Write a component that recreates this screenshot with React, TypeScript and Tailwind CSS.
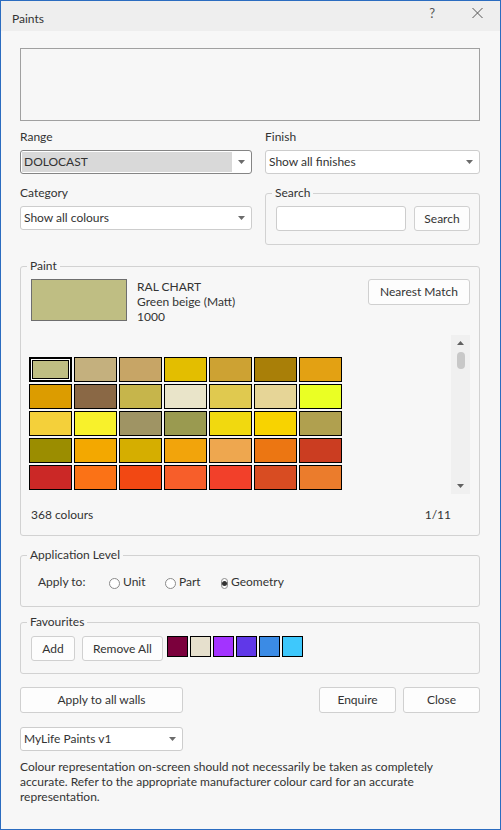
import React from 'react';

const swatches: string[][] = [
  ['#bfbe83', '#c4b07e', '#c7a566', '#e3be00', '#cda233', '#a97f08', '#e3a113'],
  ['#dc9c00', '#8a6845', '#c6b54b', '#e9e4c9', '#e0c94f', '#e6d597', '#eaff24'],
  ['#f4d03a', '#f8f12b', '#9f9464', '#9a9a50', '#f1d90f', '#f8d300', '#b0a04f'],
  ['#9b8d00', '#f3a800', '#d5ae00', '#f2a40b', '#eea74f', '#ec7612', '#cb3d21'],
  ['#cb2826', '#fb7216', '#f24813', '#f75e2a', '#f2402a', '#d84c22', '#eb7c2c'],
];

const favourites = ['#7b003c', '#e6e0cd', '#a333ff', '#6038e8', '#3b8be5', '#3ec8fc'];

function Chevron() {
  return (
    <svg width="7" height="4" viewBox="0 0 7 4">
      <path d="M0 0h7L3.5 4z" fill="#6b6b6b" />
    </svg>
  );
}

function Select({ value, width, focused }: { value: string; width: string; focused?: boolean }) {
  return (
    <div
      className={`${width} h-[24px] flex items-center rounded-[3px] border bg-white ${
        focused ? 'border-[#858585]' : 'border-[#cdcdcd]'
      }`}
    >
      {focused ? (
        <div className="flex-1 h-[20px] ml-[1px] bg-[#d9d9d9] flex items-center pl-[2px]">{value}</div>
      ) : (
        <div className="flex-1 pl-[3px]">{value}</div>
      )}
      <div className="w-[19px] flex justify-center">
        <Chevron />
      </div>
    </div>
  );
}

function Button({ children, className }: { children: React.ReactNode; className: string }) {
  return (
    <button className={`${className} flex items-center justify-center rounded-[3px] border border-[#d0d0d0] bg-[#fdfdfd]`}>
      {children}
    </button>
  );
}

function Radio({ label, checked }: { label: string; checked?: boolean }) {
  return (
    <div className="w-[56px] flex items-center">
      <span className="w-[11px] h-[11px] rounded-full border border-[#8a8a8a] bg-white flex items-center justify-center mt-[3px]">
        {checked && <span className="w-[5px] h-[5px] rounded-full bg-[#333333]" />}
      </span>
      <span className="ml-[3px] mt-[1px]">{label}</span>
    </div>
  );
}

export default function App() {
  return (
    <div className="w-[501px] h-[830px] border border-[#2b6cc0] bg-[#f7f7f7] text-[12px] leading-4 text-[#333333] font-['Lato','Noto_Sans',sans-serif] overflow-hidden">
      {/* title bar */}
      <div className="h-[30px] bg-[#eeeeee] flex items-start">
        <div className="pl-[11px] pt-[10px]">Paints</div>
        <div className="ml-auto flex items-start">
          <span className="mt-[4px] mr-[37px] text-[13px] text-[#555555]">?</span>
          <svg className="mt-[7px] mr-[17px]" width="11" height="10" viewBox="0 0 11 10">
            <path d="M0.5 0L10.5 10M10.5 0L0.5 10" stroke="#555555" strokeWidth="1" />
          </svg>
        </div>
      </div>

      <div className="pl-[19px] pr-[20px]">
        {/* preview */}
        <div className="mt-[17px] h-[73px] border border-[#a0a0a0]" />

        {/* range / finish */}
        <div className="mt-[8px] grid grid-cols-[232px_215px] gap-x-[13px]">
          <div>
            <div>Range</div>
            <div className="mt-[5px]">
              <Select value="DOLOCAST" width="w-[232px]" focused />
            </div>
          </div>
          <div>
            <div>Finish</div>
            <div className="mt-[5px]">
              <Select value="Show all finishes" width="w-[215px]" />
            </div>
          </div>
        </div>

        {/* category / search */}
        <div className="mt-[11px] grid grid-cols-[232px_215px] gap-x-[13px]">
          <div>
            <div>Category</div>
            <div className="mt-[5px]">
              <Select value="Show all colours" width="w-[232px]" />
            </div>
          </div>
          <fieldset className="h-[60px] border border-[#d2d2d2] rounded-[3px]">
            <legend className="ml-[6px] px-[3px]">Search</legend>
            <div className="mt-[5px] pl-[10px] flex gap-[8px]">
              <div className="w-[130px] h-[25px] rounded-[3px] border border-[#cdcdcd] bg-white" />
              <Button className="w-[56px] h-[25px]">Search</Button>
            </div>
          </fieldset>
        </div>

        {/* paint */}
        <fieldset className="mt-[13px] border border-[#d2d2d2] rounded-[3px] pb-[12px]">
          <legend className="ml-[6px] px-[3px]">Paint</legend>
          <div className="mt-[5px] h-[42px] pl-[10px] pr-[9px] flex items-start">
            <div className="w-[96px] h-[42px] border border-[#6e6e6e] bg-[#bfbe83]" />
            <div className="ml-[10px] leading-[15px]">
              <div>RAL CHART</div>
              <div>Green beige (Matt)</div>
              <div>1000</div>
            </div>
            <Button className="ml-auto w-[102px] h-[26px]">Nearest Match</Button>
          </div>

          <div className="mt-[14px] pl-[8px] pr-[9px] flex items-start">
            <div className="mt-[22px] grid grid-cols-[repeat(7,43px)] gap-[2px]">
              {swatches.flat().map((c, i) =>
                i === 0 ? (
                  <div key={i} className="w-[43px] h-[25px] border-2 border-black bg-white p-[1px]">
                    <div className="h-full border border-black" style={{ backgroundColor: c }} />
                  </div>
                ) : (
                  <div key={i} className="w-[43px] h-[25px] border border-black" style={{ backgroundColor: c }} />
                )
              )}
            </div>
            <div className="ml-auto w-[19px] h-[159px] bg-[#f0f0f0] flex flex-col items-center">
              <svg className="mt-[6px]" width="7" height="4" viewBox="0 0 7 4">
                <path d="M3.5 0L7 4H0z" fill="#606060" />
              </svg>
              <div className="mt-[7px] w-[8px] h-[17px] rounded-full bg-[#c8c8c8]" />
              <svg className="mt-auto mb-[6px]" width="7" height="4" viewBox="0 0 7 4">
                <path d="M0 0h7L3.5 4z" fill="#606060" />
              </svg>
            </div>
          </div>

          <div className="mt-[13px] pl-[10px] pr-[28px] flex justify-between">
            <span>368 colours</span>
            <span>1/11</span>
          </div>
        </fieldset>

        {/* application level */}
        <fieldset className="mt-[11px] h-[60px] border border-[#d2d2d2] rounded-[3px]">
          <legend className="ml-[6px] px-[3px]">Application Level</legend>
          <div className="mt-[10px] pl-[17px] flex items-center">
            <span className="w-[71px]">Apply to:</span>
            <Radio label="Unit" />
            <Radio label="Part" />
            <Radio label="Geometry" checked />
          </div>
        </fieldset>

        {/* favourites */}
        <fieldset className="mt-[7px] h-[60px] border border-[#d2d2d2] rounded-[3px]">
          <legend className="ml-[6px] px-[3px]">Favourites</legend>
          <div className="mt-[6px] pl-[10px] flex items-start">
            <Button className="w-[44px] h-[25px]">Add</Button>
            <Button className="ml-[7px] w-[81px] h-[25px]">Remove All</Button>
            <div className="ml-[4px] flex gap-[2px]">
              {favourites.map((c, i) => (
                <div key={i} className="w-[21px] h-[21px] border border-black" style={{ backgroundColor: c }} />
              ))}
            </div>
          </div>
        </fieldset>

        {/* actions */}
        <div className="mt-[13px] flex">
          <Button className="w-[163px] h-[26px]">Apply to all walls</Button>
          <Button className="ml-auto w-[77px] h-[26px]">Enquire</Button>
          <Button className="ml-[7px] w-[77px] h-[26px]">Close</Button>
        </div>

        <div className="mt-[14px]">
          <Select value="MyLife Paints v1" width="w-[163px]" />
        </div>

        <p className="mt-[8px] leading-[15px] whitespace-nowrap">
          Colour representation on-screen should not necessarily be taken as completely
          <br />
          accurate. Refer to the appropriate manufacturer colour card for an accurate
          <br />
          representation.
        </p>
      </div>
    </div>
  );
}
